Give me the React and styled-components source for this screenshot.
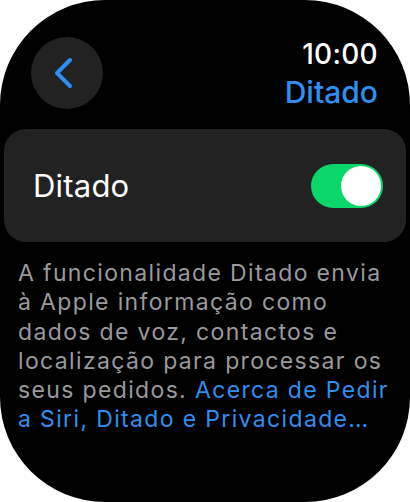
import React, { useState } from 'react'
import styled, { createGlobalStyle } from 'styled-components'

const Global = createGlobalStyle`
  html, body {
    margin: 0;
    padding: 0;
    background: #ffffff;
  }
  * { box-sizing: border-box; }
`

const Screen = styled.div`
  width: 410px;
  height: 502px;
  background: #000000;
  border-radius: 105px;
  overflow: hidden;
  font-family: Inter, "Liberation Sans", sans-serif;
  color: #ffffff;
  padding-top: 37px;
`

const Header = styled.div`
  display: flex;
  justify-content: space-between;
  align-items: flex-start;
  padding: 0 32px 0 31px;
`

const BackButton = styled.button`
  width: 72px;
  height: 72px;
  border-radius: 50%;
  border: none;
  background: #222222;
  display: flex;
  align-items: center;
  justify-content: center;
  padding: 0 6px 0 0;
  cursor: pointer;
`

const TitleCol = styled.div`
  display: flex;
  flex-direction: column;
  align-items: flex-end;
`

const Time = styled.span`
  font-size: 28px;
  line-height: 34px;
  font-weight: 500;
  letter-spacing: 0.3px;
`

const Title = styled.span`
  font-size: 30px;
  line-height: 40px;
  font-weight: 500;
  color: #2f8ff0;
  margin-top: 1px;
`

const Card = styled.div`
  margin: 17px 4px 0 4px;
  height: 113px;
  background: #222222;
  border-radius: 22px;
  display: flex;
  align-items: center;
  justify-content: space-between;
  padding: 0 23px 0 29px;
`

const Label = styled.span`
  font-size: 31px;
  font-weight: 400;
  letter-spacing: 0.2px;
`

const Toggle = styled.button`
  width: 72px;
  height: 44px;
  border-radius: 22px;
  border: none;
  padding: 2px;
  background: ${p => (p.$on ? '#0ad66a' : '#3a3a3c')};
  display: flex;
  justify-content: ${p => (p.$on ? 'flex-end' : 'flex-start')};
  align-items: center;
  cursor: pointer;
`

const Knob = styled.span`
  width: 40px;
  height: 40px;
  border-radius: 50%;
  background: #ffffff;
`

const Info = styled.p`
  margin: 17px 0 0 0;
  padding: 0 16px 0 18px;
  font-size: 23px;
  line-height: 29.3px;
  color: #9a9a9e;
  letter-spacing: 1.35px;
  white-space: nowrap;
`

const Link = styled.a`
  color: #2f8ff0;
  text-decoration: none;
`

export default function App() {
  const [on, setOn] = useState(true)

  return (
    <>
      <Global />
      <Screen>
        <Header>
          <BackButton aria-label="Voltar">
            <svg width="20" height="32" viewBox="0 0 20 32">
              <path
                d="M16 3 L3 16 L16 29"
                fill="none"
                stroke="#2f8ff0"
                strokeWidth="4"
                strokeLinecap="round"
                strokeLinejoin="round"
              />
            </svg>
          </BackButton>
          <TitleCol>
            <Time>10:00</Time>
            <Title>Ditado</Title>
          </TitleCol>
        </Header>
        <Card>
          <Label>Ditado</Label>
          <Toggle $on={on} onClick={() => setOn(!on)} aria-label="Ditado">
            <Knob />
          </Toggle>
        </Card>
        <Info>
          A funcionalidade Ditado envia<br />
          à Apple informação como<br />
          dados de voz, contactos e<br />
          localização para processar os<br />
          seus pedidos.{' '}
          <Link href="#">
            Acerca de Pedir<br />
            a Siri, Ditado e Privacidade…
          </Link>
        </Info>
      </Screen>
    </>
  )
}
